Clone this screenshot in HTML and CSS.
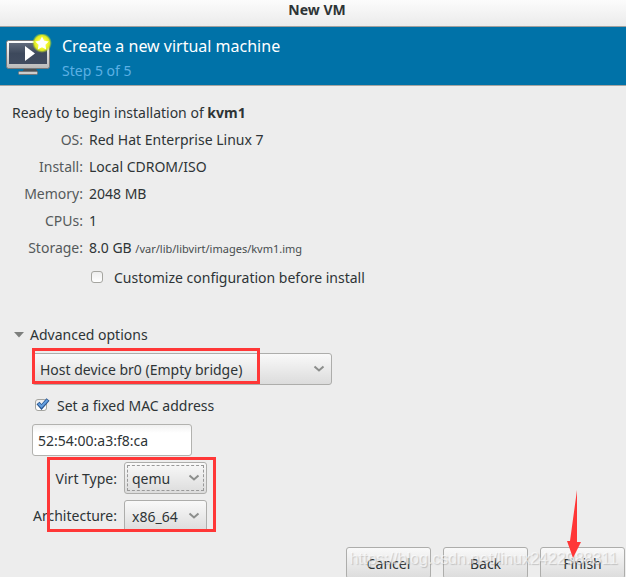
FILE: index.html
```html
<!DOCTYPE html>
<html lang="en">
<head>
<meta charset="utf-8">
<title>New VM</title>
<link rel="stylesheet" href="styles.css">
</head>
<body>
<div class="window">
  <header class="titlebar">New VM</header>
  <section class="banner">
    <svg class="banner-icon" viewBox="0 0 48 44" width="48" height="44" aria-hidden="true">
      <defs>
        <linearGradient id="frame" x1="0" y1="0" x2="0" y2="1"><stop offset="0" stop-color="#fff"/><stop offset="1" stop-color="#b8b8b8"/></linearGradient>
        <linearGradient id="screen" x1="0" y1="0" x2="0" y2="1"><stop offset="0" stop-color="#606a7b"/><stop offset=".5" stop-color="#3d495c"/><stop offset="1" stop-color="#414c60"/></linearGradient>
        <radialGradient id="glow"><stop offset="0" stop-color="#fff"/><stop offset=".5" stop-color="#f4fa30"/><stop offset=".75" stop-color="#dfea22"/><stop offset="1" stop-color="#a8d020" stop-opacity="0"/></radialGradient>
      </defs>
      <path d="M18 35h12l2 3H16z" fill="#4c5155"/>
      <rect x="12.500" y="37.500" width="19" height="3" rx="1" fill="#ccc" stroke="#74777a"/>
      <rect x=".5" y="6.500" width="43" height="28" rx="2" fill="url(#frame)" stroke="#74777a"/>
      <rect x="3" y="9" width="38" height="21" fill="url(#screen)"/>
      <path d="M19 12v15l10-7.500z" fill="#fff"/>
      <circle cx="36" cy="9" r="10" fill="url(#glow)"/>
      <path d="M36 2.500l2.100 4.200 4.700.7-3.400 3.300.8 4.700-4.200-2.200-4.200 2.200.8-4.700-3.400-3.300 4.700-.7z" fill="#fff"/>
    </svg>
    <div>
      <h1 class="banner-title">Create a new virtual machine</h1>
      <p class="banner-step">Step 5 of 5</p>
    </div>
  </section>
  <main class="content">
    <p class="lead">Ready to begin installation of <b>kvm1</b></p>
    <dl class="summary">
      <dt>OS:</dt><dd>Red Hat Enterprise Linux 7</dd>
      <dt>Install:</dt><dd>Local CDROM/ISO</dd>
      <dt>Memory:</dt><dd>2048 MB</dd>
      <dt>CPUs:</dt><dd>1</dd>
      <dt>Storage:</dt><dd>8.0 GB <small>/var/lib/libvirt/images/kvm1.img</small></dd>
    </dl>
    <label class="check customize"><input type="checkbox">Customize configuration before install</label>
    <button class="expander" type="button" aria-expanded="true">
      <svg width="10" height="6" viewBox="0 0 10 6" aria-hidden="true"><path d="M0 0h10L5 5.500z" fill="#7d7f7d"/></svg>
      Advanced options
    </button>
    <div class="advanced">
      <div class="combo network marked">
        <select aria-label="Network"><option>Host device br0 (Empty bridge)</option></select>
        <svg class="chevron" width="12" height="8" viewBox="0 0 12 8" aria-hidden="true"><path d="M1.500 1.500L6 5.500l4.500-4"/></svg>
      </div>
      <label class="check mac-check">
        <input type="checkbox" checked>
        <svg class="tick" width="14" height="13" viewBox="0 0 14 13" aria-hidden="true"><path d="M2 6l3.500 4L12 2.500" fill="none" stroke="#2a5790" stroke-width="4"/><path d="M2.500 6.500l3 3L11.500 3" fill="none" stroke="#65a0e0" stroke-width="2"/></svg>
        Set a fixed MAC address
      </label>
      <input class="mac" type="text" aria-label="MAC address" value="52:54:00:a3:f8:ca">
      <div class="machine marked">
        <label for="virt">Virt Type:</label>
        <div class="combo focused">
          <select id="virt"><option>qemu</option></select>
          <svg class="chevron" width="12" height="8" viewBox="0 0 12 8" aria-hidden="true"><path d="M1.500 1.500L6 5.500l4.500-4"/></svg>
        </div>
        <label for="arch">Architecture:</label>
        <div class="combo clipped">
          <select id="arch"><option>x86_64</option></select>
          <svg class="chevron" width="12" height="8" viewBox="0 0 12 8" aria-hidden="true"><path d="M1.500 1.500L6 5.500l4.500-4"/></svg>
        </div>
      </div>
    </div>
  </main>
  <footer class="actions">
    <button type="button">Cancel</button>
    <button type="button">Back</button>
    <button type="button">Finish</button>
    <span class="watermark">https://blog.csdn.net/linux2422988311</span>
    <svg class="arrow" width="16" height="68" viewBox="0 0 16 68" aria-hidden="true"><path d="M11 0v52h4L7 68 1 51h3z" fill="#ff3737"/></svg>
  </footer>
</div>
</body>
</html>
```
FILE: styles.css
```css
*, *::after { box-sizing: border-box; }
body {
  margin: 0;
  height: 100vh;
  overflow: hidden;
  background: #ededed;
  color: #2e3436;
  font: 14px/27px "Noto Sans", "Open Sans", sans-serif;
}
h1, p, dl, dd { margin: 0; }
button, input, select { font: inherit; color: inherit; }
.titlebar {
  height: 27px;
  padding-left: 8px;
  border-bottom: 1px solid #a0a09e;
  background: linear-gradient(#fcfcfc, #ebebeb);
  font-weight: bold;
  line-height: 20px;
  text-align: center;
}
.banner {
  display: flex;
  gap: 8px;
  height: 59px;
  padding: 7px 6px;
  border-bottom: 1px solid #a5a5a2;
  background: #0072a8;
}
.banner-title {
  color: #fff;
  font-size: 16px;
  font-weight: normal;
  line-height: 25px;
}
.banner-step { color: #5cb0e4; line-height: 23px; }
.content { padding: 13px 12px 0; }
.summary {
  display: grid;
  grid-template-columns: 71px 1fr;
  column-gap: 6px;
}
.summary dt { color: #555a5b; text-align: right; }
.summary dd, .lead { height: 27px; }
.summary small { color: #474c4e; font-size: 11px; }
.check { display: flex; align-items: center; position: relative; }
.check input {
  appearance: none;
  width: 12px;
  height: 12px;
  margin: 0 11px 2px 0;
  border: 1px solid #a5a5a0;
  border-radius: 3px;
  background: linear-gradient(#eee, #fff);
}
.customize { margin: 3px 0 30px 79px; }
.expander {
  display: flex;
  align-items: center;
  gap: 6px;
  padding: 0 2px;
  border: 0;
  background: none;
}
.advanced { padding: 5px 20px 0; }
.combo { position: relative; height: 32px; }
.combo select {
  appearance: none;
  width: 100%;
  height: 32px;
  padding: 0 7px;
  border: 1px solid #adadab;
  border-radius: 3px;
  background: linear-gradient(#f9f9f9, #dcdcdc);
}
.chevron {
  position: absolute;
  top: 12px;
  right: 7px;
  fill: none;
  stroke: #8c8e8c;
  stroke-width: 2;
  pointer-events: none;
}
.network { width: 300px; }
.marked { position: relative; }
.marked::after {
  content: "";
  position: absolute;
  border: 3px solid #ff3737;
  pointer-events: none;
}
.network::after { top: -5px; left: 0; width: 228px; height: 36px; }
.mac-check { margin: 7px 0 5px 3px; }
.mac-check input { margin-right: 10px; }
.tick { position: absolute; left: 1px; top: 5px; }
.mac {
  display: block;
  width: 160px;
  height: 32px;
  padding: 0 5px;
  border: 1px solid #b2b2af;
  border-radius: 3px;
  background: linear-gradient(#f1f1f1, #fff 8px);
}
.machine {
  display: grid;
  grid-template-columns: 85px 83px;
  gap: 6px 7px;
  align-items: center;
  width: max-content;
  padding-top: 6px;
}
.machine label { text-align: right; white-space: nowrap; justify-self: end; }
.machine::after { top: 1px; left: 15px; width: 169px; height: 75px; }
.focused select { outline: 1px dashed #999; outline-offset: -4px; }
.clipped { height: 30px; overflow: hidden; }
.actions {
  position: relative;
  display: flex;
  justify-content: flex-end;
  gap: 12px;
  padding: 17px 1px 0 0;
}
.actions button {
  width: 85px;
  height: 32px;
  border: 1px solid #adadab;
  border-radius: 3px;
  background: linear-gradient(#f9f9f9, #dcdcdc);
}
.watermark {
  position: absolute;
  right: 8px;
  bottom: 8px;
  color: rgba(255, 255, 255, .6);
  font-family: "Liberation Sans", sans-serif;
  font-size: 16px;
  line-height: 24px;
  text-shadow: 1px 1px 1px rgba(120, 120, 120, .35);
  pointer-events: none;
}
.arrow { position: absolute; right: 44px; bottom: 21px; }
```
